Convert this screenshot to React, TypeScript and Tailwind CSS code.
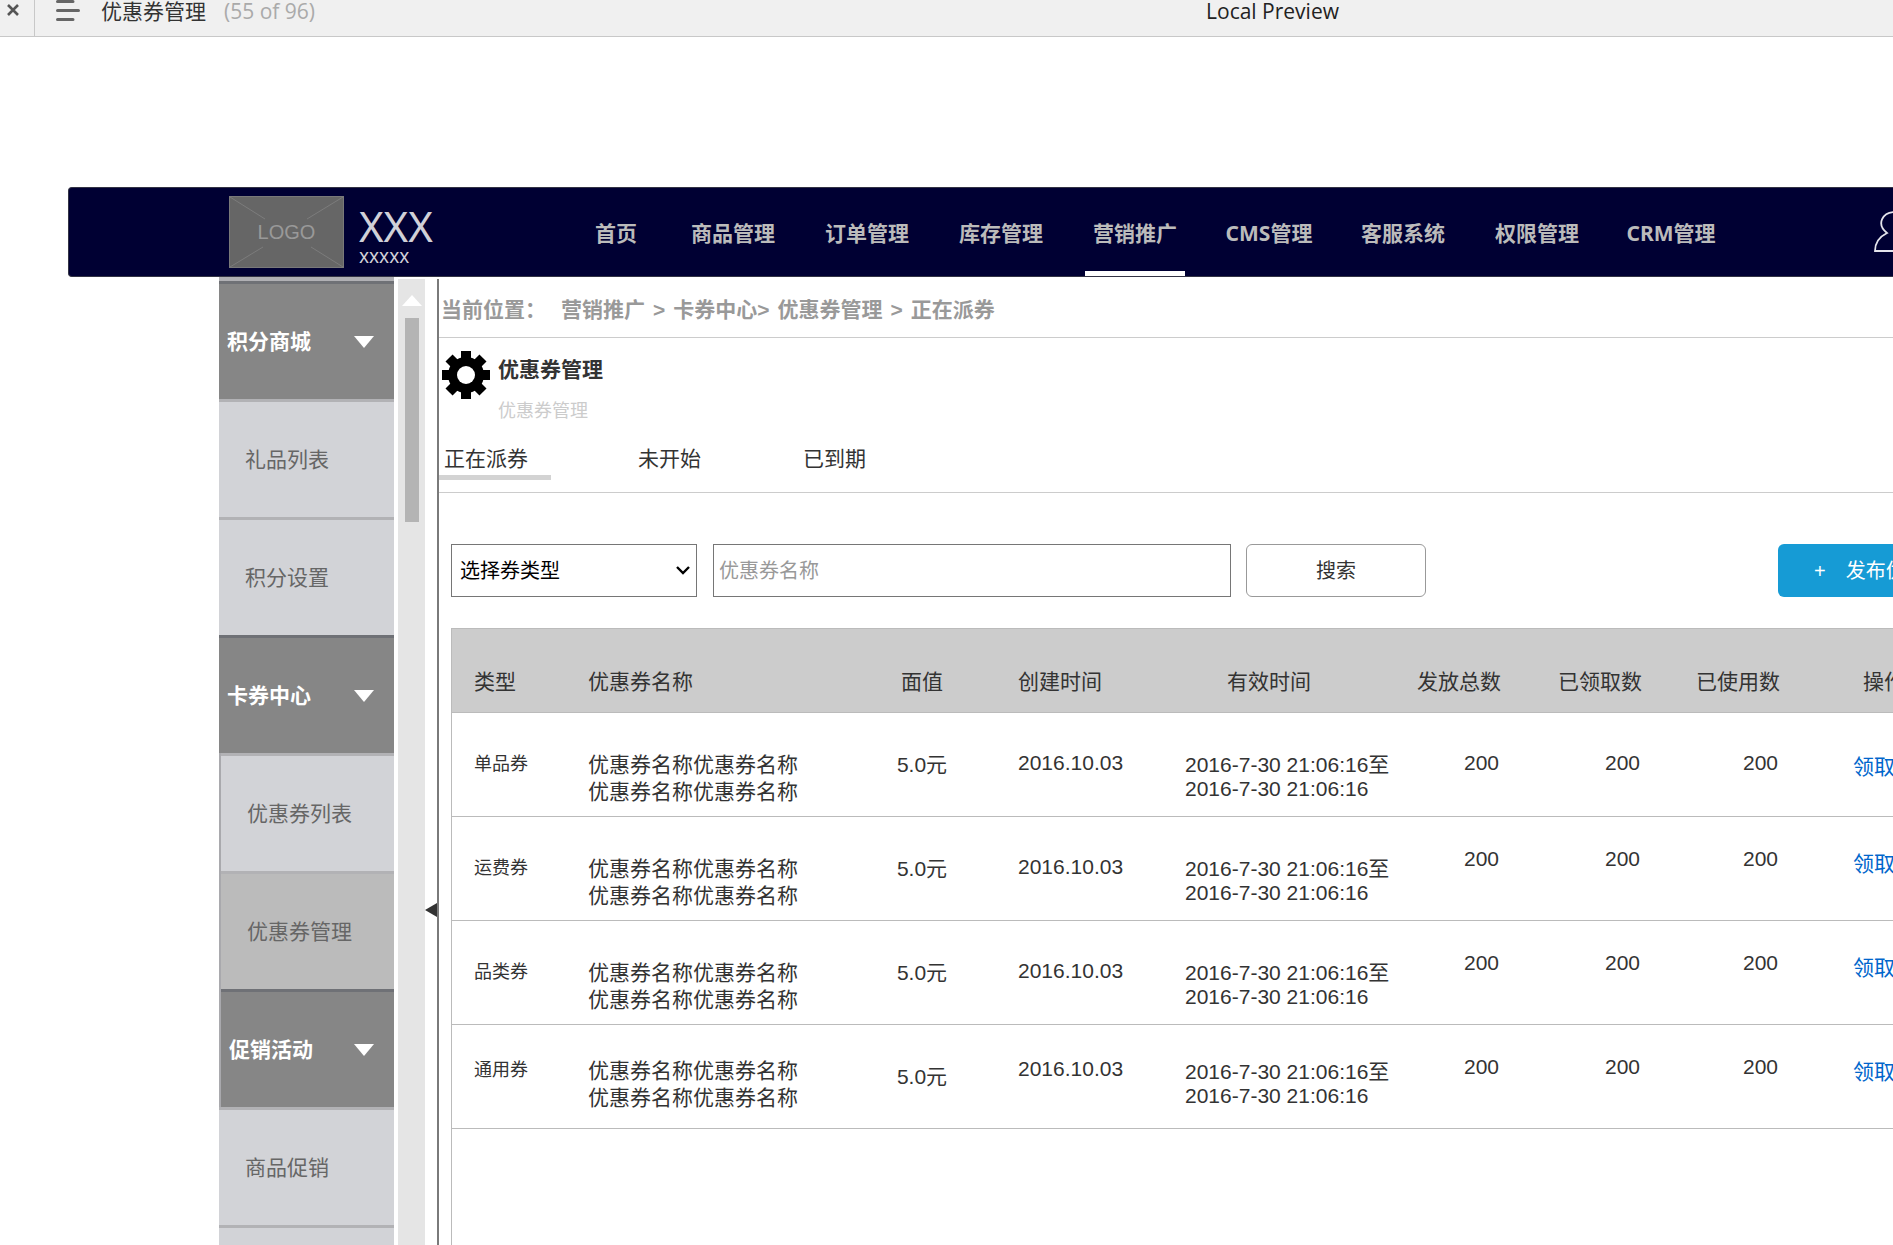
import {useId, useState} from "react";
import clsx from "clsx";

const NAV_ITEMS = ['首页', '商品管理', '订单管理', '库存管理', '营销推广', 'CMS管理', '客服系统', '权限管理', 'CRM管理']

const TABS = [
    {label: '正在派券', width: 'w-[112px]'},
    {label: '未开始', width: 'w-[83px]'},
    {label: '已到期', width: 'w-[83px]'},
]

type Coupon = {
    kind: string
    textPad: string
    periodPad: string
    countPad: string
    actionPad: string
}

const COUPONS: Coupon[] = [
    {kind: '单品券', textPad: 'pt-[38px]', periodPad: 'pt-10', countPad: 'pt-[38px]', actionPad: 'pt-[42px]'},
    {kind: '运费券', textPad: 'pt-[38px]', periodPad: 'pt-10', countPad: 'pt-[30px]', actionPad: 'pt-[35px]'},
    {kind: '品类券', textPad: 'pt-[38px]', periodPad: 'pt-10', countPad: 'pt-[30px]', actionPad: 'pt-[35px]'},
    {kind: '通用券', textPad: 'pt-8', periodPad: 'pt-[35px]', countPad: 'pt-[30px]', actionPad: 'pt-[35px]'},
]

function PreviewBar() {
    return (
        <div className="grid h-[37px] shrink-0 grid-cols-[35px_1fr] border-b border-[#c8c8c8] bg-[#f0f0f0] font-['Open_Sans','Noto_Sans_CJK_SC',sans-serif]">
            <button type="button" aria-label="关闭" className="border-r border-[#c8c8c8] pb-4 pl-[7px]">
                <svg viewBox="0 0 12 12" className="size-3 stroke-[#555]" strokeWidth="2.6" fill="none">
                    <path d="M1 1l10 10M11 1L1 11"/>
                </svg>
            </button>
            <div className="flex items-start pl-[21px] text-[21px] leading-[22px]">
                <button type="button" aria-label="菜单">
                    <svg viewBox="0 0 24 22" className="h-[22px] w-6 stroke-[#666]" strokeWidth="3" strokeLinecap="round">
                        <path d="M1.5 1.5H17M1.5 10.5H22.500M1.5 19.500H17"/>
                    </svg>
                </button>
                <span className="ml-[21px] text-[#333]">优惠券管理</span>
                <span className="ml-[18px] text-[#aaa]">(55 of 96)</span>
                <span className="ml-[891px] whitespace-nowrap text-[#222]">Local Preview</span>
            </div>
        </div>
    )
}

function TopNav() {
    const [active, setActive] = useState('营销推广')
    return (
        <header className="mt-[150px] ml-[68px] flex h-[90px] shrink-0 items-stretch rounded-l-sm border border-r-0 border-[#333344] bg-[#000033] font-['Noto_Sans','Noto_Sans_CJK_SC',sans-serif]">
            <div className="ml-40 flex w-[337px] shrink-0 items-center">
                <div className="grid h-[72px] w-[115px] place-items-center border border-[#797979] bg-[#666]">
                    <svg viewBox="0 0 113 70" className="col-start-1 row-start-1 h-[70px] w-[113px] stroke-[#7c7c7c]">
                        <path d="M0 0L35 22M113 0L77 22M0 70L33 50M113 70L81 50"/>
                    </svg>
                    <span className="col-start-1 row-start-1 font-['Liberation_Sans',sans-serif] text-xl text-[#999]">LOGO</span>
                </div>
                <div className="mt-2 ml-[15px] text-[#d0d0d8]">
                    <div className="text-[42px] leading-10">XXX</div>
                    <div className="text-[19px] leading-5">xxxxx</div>
                </div>
            </div>
            <nav className="flex shrink-0">
                {NAV_ITEMS.map((item, index) => (
                    <a
                        key={item}
                        href="#"
                        onClick={() => setActive(item)}
                        className={clsx(
                            'flex flex-col items-center text-[21px] font-bold text-[#bbb]',
                            index === 0 ? 'w-[100px]' : 'w-[134px]'
                        )}
                    >
                        <span className="mt-[29px] leading-8">{item}</span>
                        {item === active && <span className="mt-auto h-[5px] w-[100px] bg-white"/>}
                    </a>
                ))}
            </nav>
            <button type="button" aria-label="用户" className="ml-[136px] shrink-0 self-center">
                <svg viewBox="0 0 44 44" className="size-11 stroke-[#e4e4ec]" strokeWidth="1.8" fill="none">
                    <path d="M13 23C2 14 8 2 22 2S42 14 31 23C39 27 43 33 43 41H1C1 33 5 27 13 23Z"/>
                </svg>
            </button>
        </header>
    )
}

function MenuHeader({label}: { label: string }) {
    return (
        <button type="button"
                className="flex h-[118px] w-full items-center justify-between border-t-3 border-[#6f7176] bg-[#868686] pr-5 pl-2 text-[21px] font-bold text-white">
            {label}
            <svg viewBox="0 0 20 12" className="h-3 w-5 fill-white">
                <path d="M0 0H20L10 12Z"/>
            </svg>
        </button>
    )
}

function MenuItem({label, active}: { label: string, active?: boolean }) {
    return (
        <a href="#"
           className={clsx(
               'flex h-[118px] w-full items-center border-t-3 border-[#b2b2b5] pl-[26px] text-[21px] text-[#666]',
               active ? 'bg-[#bbb]' : 'bg-[#d2d3d7]'
           )}>
            {label}
        </a>
    )
}

function Sidebar() {
    return (
        <aside className="ml-[219px] flex shrink-0">
            <div className="w-[175px] overflow-hidden border-t-4 border-[#b0b0b4]">
                <MenuHeader label="积分商城"/>
                <MenuItem label="礼品列表"/>
                <MenuItem label="积分设置"/>
                <MenuHeader label="卡券中心"/>
                <div className="border-l-2 border-[#a9a9ad]">
                    <MenuItem label="优惠券列表"/>
                    <MenuItem label="优惠券管理" active/>
                    <MenuHeader label="促销活动"/>
                </div>
                <MenuItem label="商品促销"/>
                <MenuItem label=""/>
            </div>
            <div className="mt-[2px] ml-1 flex w-[27px] flex-col items-center bg-[#e5e5e5] pt-4">
                <svg viewBox="0 0 20 11" className="h-[11px] w-5 fill-white">
                    <path d="M10 0L20 11H0Z"/>
                </svg>
                <div className="mt-3 h-[204px] w-[14px] bg-[#b4b4b4]"/>
            </div>
            <button type="button" aria-label="收起" className="mt-[626px] h-[14px] self-start">
                <svg viewBox="0 0 12 14" className="h-[14px] w-3 fill-[#333]">
                    <path d="M12 0V14L0 7Z"/>
                </svg>
            </button>
        </aside>
    )
}

function Breadcrumb() {
    return (
        <div className="flex h-[59px] items-center gap-2 border-b border-[#ccc] pt-1 pl-[2px] text-[21px] font-bold whitespace-nowrap text-[#999]">
            <span className="mr-[7px]">当前位置：</span>
            <a href="#">营销推广</a>
            <span>&gt;</span>
            <a href="#">卡券中心&gt;</a>
            <a href="#">优惠券管理</a>
            <span>&gt;</span>
            <span>正在派券</span>
        </div>
    )
}

function PageTitle() {
    return (
        <div className="flex pt-[13px] pl-[3px]">
            <svg viewBox="0 0 48 48" className="size-12 shrink-0">
                <g fill="#000">
                    <circle cx="24" cy="24" r="18"/>
                    <rect x="19" y="0" width="10" height="48"/>
                    <rect x="0" y="19" width="48" height="10"/>
                    <rect x="19" y="0" width="10" height="48" transform="rotate(45 24 24)"/>
                    <rect x="19" y="0" width="10" height="48" transform="rotate(-45 24 24)"/>
                </g>
                <circle cx="24" cy="24" r="9" fill="#fff"/>
            </svg>
            <div className="ml-2">
                <h1 className="mt-[3px] text-[21px] leading-8 font-bold text-[#333]">优惠券管理</h1>
                <p className="mt-[13px] text-lg leading-6 text-[#ccc]">优惠券管理</p>
            </div>
        </div>
    )
}

function Tabs() {
    const [current, setCurrent] = useState('正在派券')
    return (
        <div className="mt-5 flex h-[50px] gap-[82px] border-b border-[#ccc] text-[21px] text-[#333]">
            {TABS.map((tab) => (
                <button
                    key={tab.label}
                    type="button"
                    onClick={() => setCurrent(tab.label)}
                    className={clsx(
                        'h-[37px] border-b-5 pl-[5px] text-left leading-8 whitespace-nowrap',
                        tab.width,
                        tab.label === current ? 'border-[#d3d3d3]' : 'border-transparent'
                    )}
                >
                    {tab.label}
                </button>
            ))}
        </div>
    )
}

function Filters() {
    const id = useId()
    return (
        <form className="mt-[51px] ml-3 flex h-[53px] text-xl" onSubmit={(e) => e.preventDefault()}>
            <label htmlFor={`${id}_kind`} className="sr-only">选择券类型</label>
            <div className="grid w-[246px] shrink-0 items-center">
                <select id={`${id}_kind`}
                        className="col-start-1 row-start-1 h-full w-full appearance-none border border-[#767676] bg-white pl-2 text-black">
                    <option>选择券类型</option>
                </select>
                <svg viewBox="0 0 14 9" fill="none" strokeWidth="2.4"
                     className="pointer-events-none col-start-1 row-start-1 mr-[7px] h-[9px] w-[14px] justify-self-end stroke-black">
                    <path d="M1 1L7 7L13 1"/>
                </svg>
            </div>
            <label htmlFor={`${id}_name`} className="sr-only">优惠券名称</label>
            <input id={`${id}_name`} type="text" placeholder="优惠券名称"
                   className="ml-4 w-[518px] shrink-0 border border-[#767676] px-[5px] placeholder:text-[#999]"/>
            <button type="submit"
                    className="ml-[15px] w-[180px] shrink-0 rounded-md border border-[#999] text-[#333]">搜索
            </button>
            <button type="button"
                    className="ml-[352px] flex w-[220px] shrink-0 items-center gap-5 rounded-md bg-[#169bd5] pl-9 whitespace-nowrap text-white">
                <span>+</span>
                发布优惠券
            </button>
        </form>
    )
}

function CouponTable() {
    return (
        <div className="mt-[31px] ml-3 flex-1 border-l border-[#bbb]">
            <table className="w-[1560px] table-fixed text-left text-[21px] leading-6 whitespace-nowrap text-[#333]">
                <colgroup>
                    <col className="w-[114px]"/>
                    <col className="w-[282px]"/>
                    <col className="w-[148px]"/>
                    <col className="w-[167px]"/>
                    <col className="w-[231px]"/>
                    <col className="w-[107px]"/>
                    <col className="w-[141px]"/>
                    <col className="w-[138px]"/>
                    <col/>
                </colgroup>
                <thead>
                <tr className="h-[84px] border-y border-[#bbb] bg-[#ccc] [&>th]:pt-[23px] [&>th]:font-normal">
                    <th className="pl-[22px]">类型</th>
                    <th className="pl-[22px]">优惠券名称</th>
                    <th className="text-center">面值</th>
                    <th className="pl-[22px]">创建时间</th>
                    <th className="pl-16">有效时间</th>
                    <th className="text-right">发放总数</th>
                    <th className="text-right">已领取数</th>
                    <th className="text-right">已使用数</th>
                    <th className="pl-[83px]">操作</th>
                </tr>
                </thead>
                <tbody>
                {COUPONS.map(({kind, textPad, periodPad, countPad, actionPad}) => (
                    <tr key={kind} className="h-[104px] border-b border-[#bbb] align-top">
                        <td className={clsx('pl-[22px] text-lg leading-[27px]', textPad)}>{kind}</td>
                        <td className={clsx('pl-[22px] leading-[27px]', textPad)}>
                            优惠券名称优惠券名称<br/>优惠券名称优惠券名称
                        </td>
                        <td className="pt-10 text-center">5.0元</td>
                        <td className={clsx('pl-[22px]', textPad)}>2016.10.03</td>
                        <td className={clsx('pl-[22px]', periodPad)}>
                            2016-7-30 21:06:16至<br/>2016-7-30 21:06:16
                        </td>
                        <td className={clsx('pr-[2px] text-right', countPad)}>200</td>
                        <td className={clsx('pr-[2px] text-right', countPad)}>200</td>
                        <td className={clsx('pr-[2px] text-right', countPad)}>200</td>
                        <td className={clsx('pl-[73px]', actionPad)}>
                            <a href="#" className="text-[#0066cc]">领取</a>
                        </td>
                    </tr>
                ))}
                </tbody>
            </table>
        </div>
    )
}

export default function App() {
    return (
        <div className="flex h-screen flex-col overflow-hidden bg-white font-['Liberation_Sans','Noto_Sans_CJK_SC',sans-serif]">
            <PreviewBar/>
            <TopNav/>
            <div className="flex min-h-0 flex-1">
                <Sidebar/>
                <main className="mt-[2px] flex min-w-0 flex-1 flex-col border-l-2 border-[#7a7a7a]">
                    <Breadcrumb/>
                    <PageTitle/>
                    <Tabs/>
                    <Filters/>
                    <CouponTable/>
                </main>
            </div>
        </div>
    )
}
